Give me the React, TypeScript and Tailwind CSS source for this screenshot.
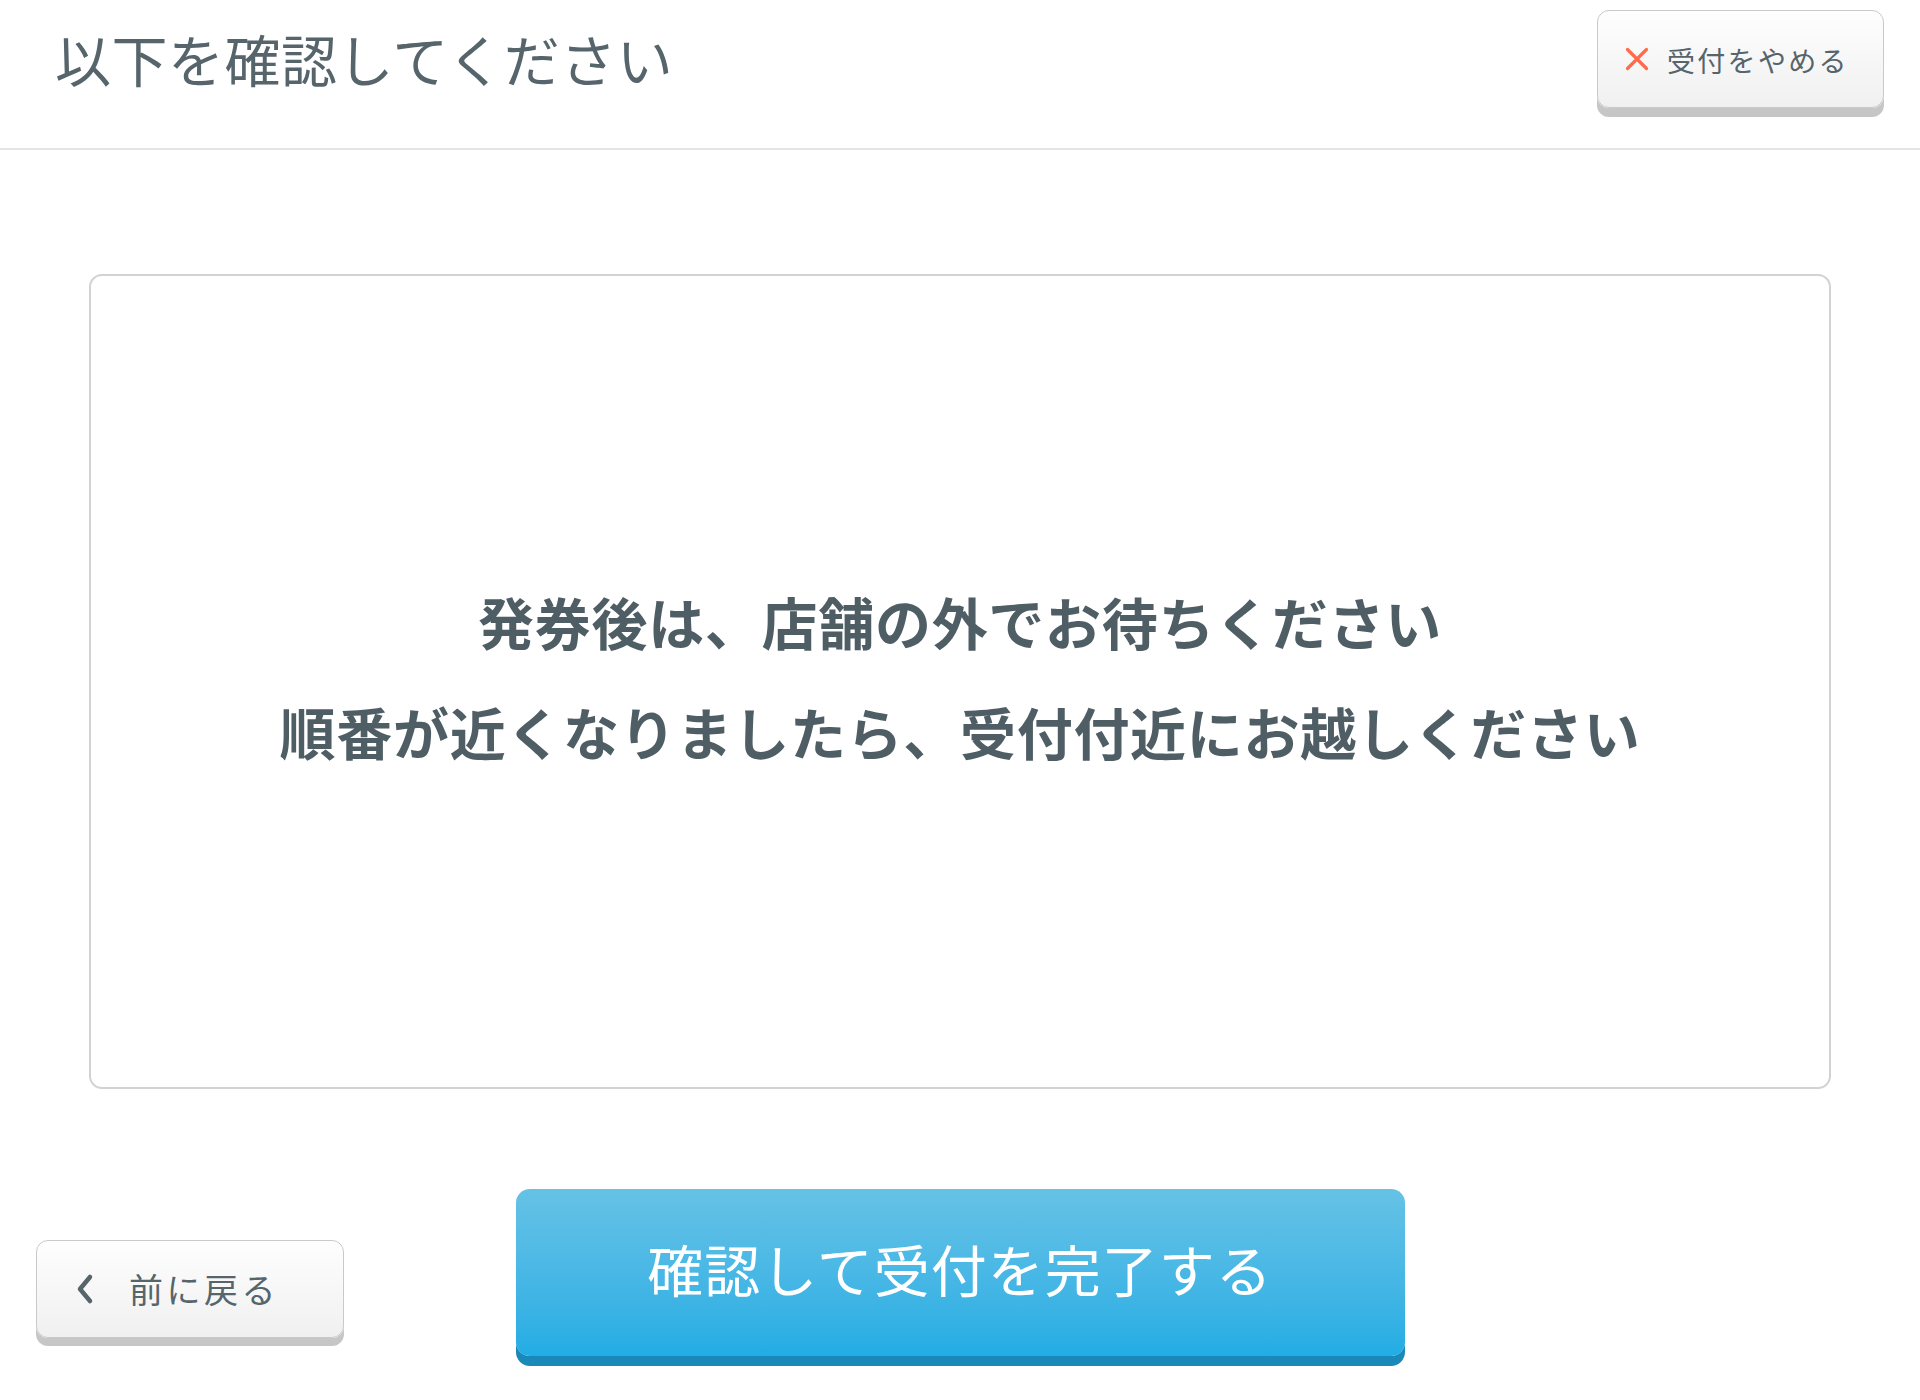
import React from 'react';

const font = { fontFamily: '"Noto Sans CJK JP", "Noto Sans", sans-serif' };

const CloseIcon = () => (
  <svg width="24" height="24" viewBox="0 0 24 24" className="shrink-0">
    <path d="M2.5 2.5 L21.5 21.5 M21.5 2.5 L2.5 21.5" stroke="#ff6a4a" strokeWidth="3.2" strokeLinecap="round" fill="none" />
  </svg>
);

const ChevronLeft = () => (
  <svg width="20" height="32" viewBox="0 0 20 32" className="shrink-0">
    <path d="M15 4 L5 16 L15 28" stroke="#56646b" strokeWidth="4.5" strokeLinecap="round" strokeLinejoin="round" fill="none" />
  </svg>
);

const App: React.FC = () => {
  return (
    <div className="w-[1920px] h-[1400px] bg-white overflow-hidden flex flex-col" style={font}>
      <header className="flex items-start justify-between pl-[55px] pr-[36px] pt-[10px] h-[150px] border-b-2 border-[#e4e4e4]">
        <h1 className="mt-[16px] text-[56px] leading-[64px] tracking-[0.5px] font-normal text-[#56646b]">
          以下を確認してください
        </h1>
        <button className="w-[287px] h-[98px] rounded-[12px] border border-[#c9c9c9] bg-gradient-to-b from-[#fefefe] to-[#f0f0f0] shadow-[0_9px_0_#c6c6c6] flex items-center pl-[27px] gap-[18px]">
          <CloseIcon />
          <span className="text-[28px] tracking-[2.3px] text-[#56646b] mt-[2px]">受付をやめる</span>
        </button>
      </header>

      <main className="flex-1 flex flex-col px-[89px] pt-[124px]">
        <div className="h-[815px] rounded-[13px] border-2 border-[#d2d2d2] flex flex-col items-center justify-center gap-[54px] pb-[12px]">
          <p className="text-[56px] leading-[56px] tracking-[0.7px] font-bold text-[#4f5e65]">発券後は、店舗の外でお待ちください</p>
          <p className="text-[56px] leading-[56px] tracking-[0.7px] font-bold text-[#4f5e65]">順番が近くなりましたら、受付付近にお越しください</p>
        </div>
      </main>

      <footer className="grid grid-cols-[1fr_889px_1fr] items-end pb-[44px]">
        <div className="pl-[36px] mb-[18px]">
          <button className="w-[308px] h-[98px] rounded-[12px] border border-[#c9c9c9] bg-gradient-to-b from-[#fefefe] to-[#f0f0f0] shadow-[0_8px_0_#c6c6c6] flex items-center pl-[38px] gap-[34px]">
            <ChevronLeft />
            <span className="text-[34px] tracking-[3.5px] text-[#56646b] mb-[2px]">前に戻る</span>
          </button>
        </div>
        <button className="h-[167px] rounded-[14px] bg-gradient-to-b from-[#65c2e6] to-[#21ade4] shadow-[0_10px_0_#1a88b9] flex items-center justify-center pb-[10px]">
          <span className="text-[56px] tracking-[1px] font-normal text-white">確認して受付を完了する</span>
        </button>
        <div />
      </footer>
    </div>
  );
};

export default App;
